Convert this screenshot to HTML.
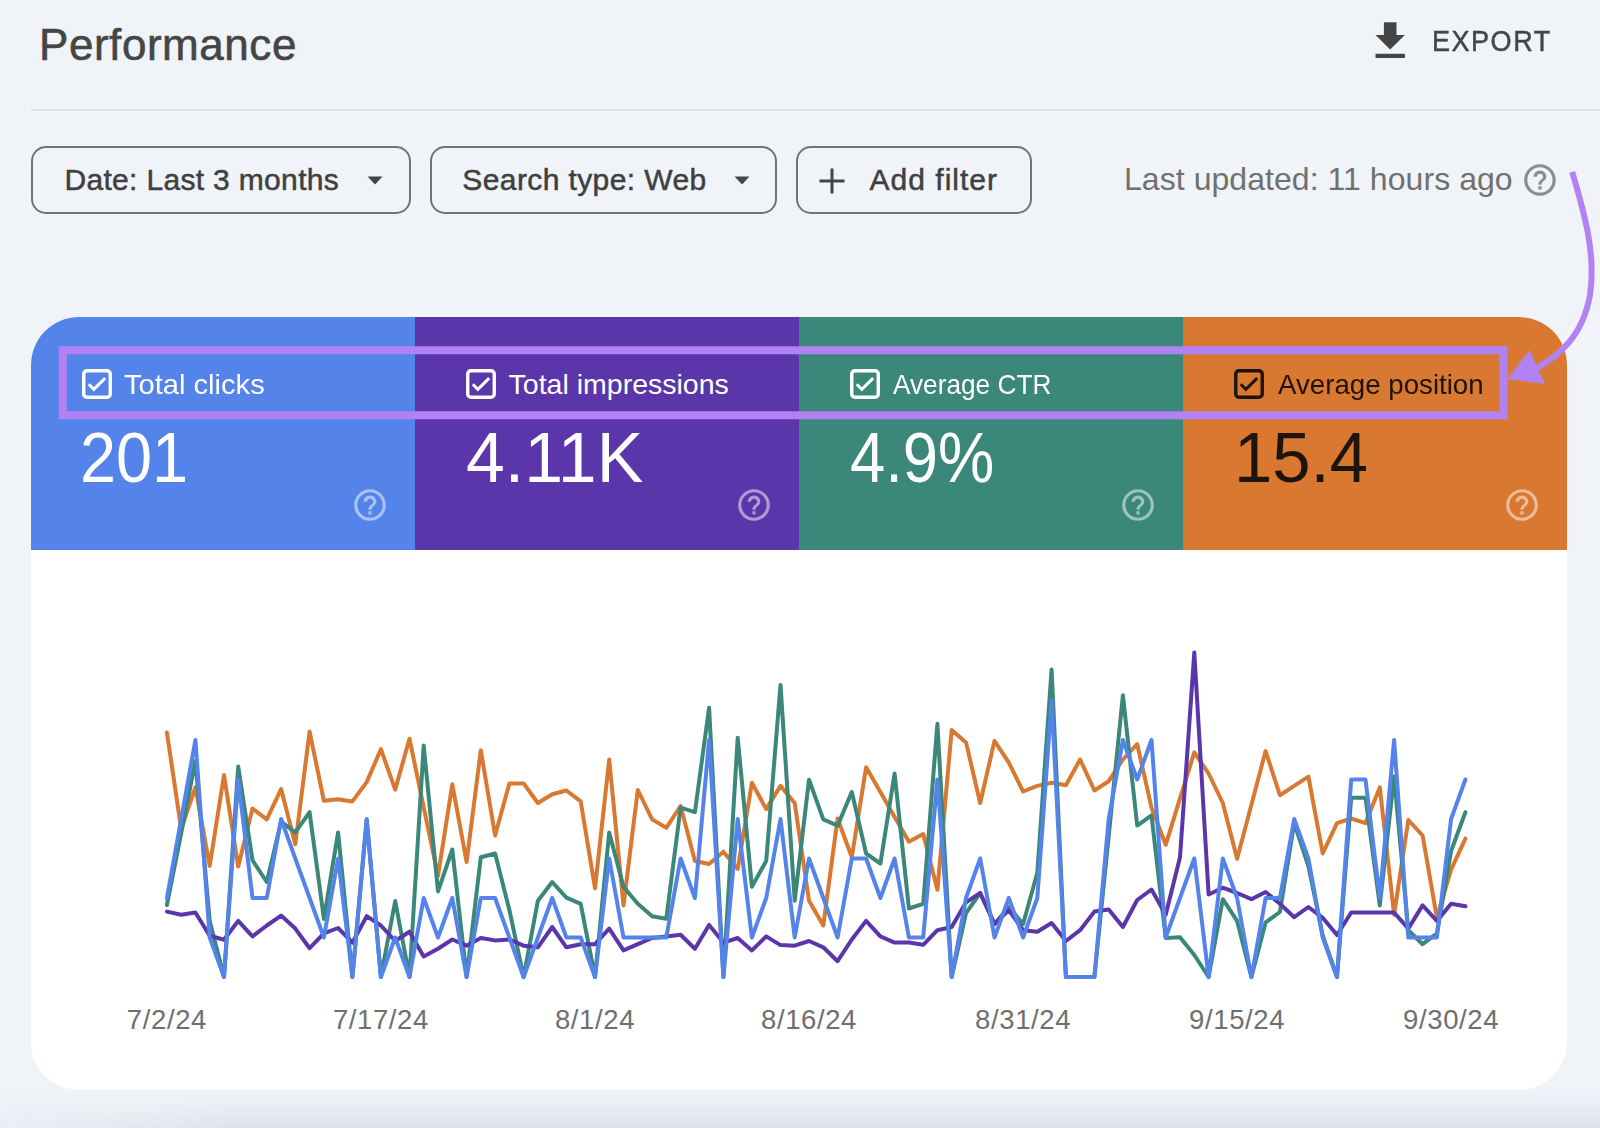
<!DOCTYPE html>
<html><head><meta charset="utf-8"><style>
html,body{margin:0;padding:0;}
body{width:1600px;height:1128px;position:relative;overflow:hidden;background:#f0f4f9;font-family:"Liberation Sans",sans-serif;}
.t{position:absolute;white-space:nowrap;}
.s{-webkit-text-stroke:0.5px currentColor;}
.a{position:absolute;display:block;}
.chip{position:absolute;box-sizing:border-box;border:2px solid #737373;border-radius:15px;}
</style></head><body>

<div class="t" style="left:39px;top:23.1px;font-size:44px;line-height:44px;color:#454545;letter-spacing:0.55px;-webkit-text-stroke:0.6px #454545;">Performance</div>
<svg class="a" style="left:1365px;top:15.9px" width="50.4" height="50.4" viewBox="0 0 24 24"><path fill="#454545" d="M19 9h-4V3H9v6H5l7 7 7-7zM5 18v2h14v-2H5z"/></svg>
<div class="t" style="left:1432px;top:26.2px;font-size:30px;line-height:30px;color:#454545;letter-spacing:1.7px;transform:scaleX(0.9);transform-origin:0 0;-webkit-text-stroke:0.5px #454545;">EXPORT</div>
<div class="a" style="left:31px;top:109px;width:1569px;height:2px;background:#dfe1e1;"></div>
<div class="chip" style="left:31px;top:145.5px;width:380px;height:68px;"></div>
<div class="chip" style="left:430px;top:145.5px;width:347px;height:68px;"></div>
<div class="chip" style="left:796px;top:145.5px;width:236px;height:68px;"></div>
<div class="t" style="left:64.4px;top:164.7px;font-size:30px;line-height:30px;color:#3f3f3f;letter-spacing:0.33px;-webkit-text-stroke:0.5px #3f3f3f;">Date: Last 3 months</div>
<div class="t" style="left:462.3px;top:164.7px;font-size:30px;line-height:30px;color:#3f3f3f;letter-spacing:0.4px;-webkit-text-stroke:0.5px #3f3f3f;">Search type: Web</div>
<div class="t" style="left:869.6px;top:164.7px;font-size:30px;line-height:30px;color:#3f3f3f;letter-spacing:1.0px;-webkit-text-stroke:0.5px #3f3f3f;">Add filter</div>
<svg class="a" style="left:360px;top:170px" width="30" height="20"><path d="M7.5,6.5 H22.5 L15,14.5 Z" fill="#454545"/></svg>
<svg class="a" style="left:727px;top:170px" width="30" height="20"><path d="M7.5,6.5 H22.5 L15,14.5 Z" fill="#454545"/></svg>
<svg class="a" style="left:815px;top:163.5px" width="34" height="34"><path d="M17,4.5 V29.5 M4.5,17 H29.5" stroke="#454545" stroke-width="3"/></svg>
<div class="t" style="left:1124.0px;top:163.1px;font-size:32px;line-height:32px;color:#707070;letter-spacing:0.055px;">Last updated: 11 hours ago</div>
<svg class="a" style="left:1521.24px;top:160.74px;opacity:1.0" width="37.92" height="37.92" viewBox="0 0 24 24"><path fill="#8c8c8c" d="M11 18h2v-2h-2v2zm1-16C6.48 2 2 6.48 2 12s4.48 10 10 10 10-4.48 10-10S17.52 2 12 2zm0 18c-4.41 0-8-3.59-8-8s3.59-8 8-8 8 3.59 8 8-3.59 8-8 8zm0-14c-2.21 0-4 1.79-4 4h2c0-1.1.9-2 2-2s2 .9 2 2c0 2-3 1.75-3 5h2c0-2.25 3-2.5 3-5 0-2.21-1.79-4-4-4z"/></svg>
<div class="a" style="left:31px;top:317px;width:1536px;height:773px;background:#fff;border-radius:48px;overflow:hidden;"><div class="a" style="left:0;top:0;width:384px;height:232.5px;background:#5484ea"></div><div class="a" style="left:384px;top:0;width:384px;height:232.5px;background:#5a36aa"></div><div class="a" style="left:768px;top:0;width:384px;height:232.5px;background:#3b877a"></div><div class="a" style="left:1152px;top:0;width:384px;height:232.5px;background:#d97830"></div></div>
<svg class="a" style="left:82px;top:369.3px" width="30" height="30" viewBox="0 0 30 30"><rect x="1.75" y="1.75" width="26.5" height="26.5" rx="3.2" fill="none" stroke="#ffffff" stroke-width="3.4"/><path d="M6.8,15.2 L11.8,20.3 L23.2,9.1" fill="none" stroke="#ffffff" stroke-width="3"/></svg>
<div class="t" style="left:123.6px;top:369.7px;font-size:28.5px;line-height:28.5px;color:#ffffff;letter-spacing:0px;transform:scaleX(1.021);transform-origin:0 0;">Total clicks</div>
<div class="t" style="left:80.3px;top:422.0px;font-size:71px;line-height:71px;color:#ffffff;letter-spacing:0px;transform:scaleX(0.913);transform-origin:0 0;">201</div>
<svg class="a" style="left:350.98px;top:485.98px;opacity:0.5" width="38.04" height="38.04" viewBox="0 0 24 24"><path fill="#ffffff" d="M11 18h2v-2h-2v2zm1-16C6.48 2 2 6.48 2 12s4.48 10 10 10 10-4.48 10-10S17.52 2 12 2zm0 18c-4.41 0-8-3.59-8-8s3.59-8 8-8 8 3.59 8 8-3.59 8-8 8zm0-14c-2.21 0-4 1.79-4 4h2c0-1.1.9-2 2-2s2 .9 2 2c0 2-3 1.75-3 5h2c0-2.25 3-2.5 3-5 0-2.21-1.79-4-4-4z"/></svg>
<svg class="a" style="left:466px;top:369.3px" width="30" height="30" viewBox="0 0 30 30"><rect x="1.75" y="1.75" width="26.5" height="26.5" rx="3.2" fill="none" stroke="#ffffff" stroke-width="3.4"/><path d="M6.8,15.2 L11.8,20.3 L23.2,9.1" fill="none" stroke="#ffffff" stroke-width="3"/></svg>
<div class="t" style="left:508.6px;top:369.7px;font-size:28.5px;line-height:28.5px;color:#ffffff;letter-spacing:0px;transform:scaleX(1.0);transform-origin:0 0;">Total impressions</div>
<div class="t" style="left:466.1px;top:422.0px;font-size:71px;line-height:71px;color:#ffffff;letter-spacing:0px;transform:scaleX(0.983);transform-origin:0 0;">4.11K</div>
<svg class="a" style="left:734.98px;top:485.98px;opacity:0.5" width="38.04" height="38.04" viewBox="0 0 24 24"><path fill="#ffffff" d="M11 18h2v-2h-2v2zm1-16C6.48 2 2 6.48 2 12s4.48 10 10 10 10-4.48 10-10S17.52 2 12 2zm0 18c-4.41 0-8-3.59-8-8s3.59-8 8-8 8 3.59 8 8-3.59 8-8 8zm0-14c-2.21 0-4 1.79-4 4h2c0-1.1.9-2 2-2s2 .9 2 2c0 2-3 1.75-3 5h2c0-2.25 3-2.5 3-5 0-2.21-1.79-4-4-4z"/></svg>
<svg class="a" style="left:850px;top:369.3px" width="30" height="30" viewBox="0 0 30 30"><rect x="1.75" y="1.75" width="26.5" height="26.5" rx="3.2" fill="none" stroke="#ffffff" stroke-width="3.4"/><path d="M6.8,15.2 L11.8,20.3 L23.2,9.1" fill="none" stroke="#ffffff" stroke-width="3"/></svg>
<div class="t" style="left:892.6px;top:369.7px;font-size:28.5px;line-height:28.5px;color:#ffffff;letter-spacing:0px;transform:scaleX(0.92);transform-origin:0 0;">Average CTR</div>
<div class="t" style="left:850.0px;top:422.0px;font-size:71px;line-height:71px;color:#ffffff;letter-spacing:0px;transform:scaleX(0.892);transform-origin:0 0;">4.9%</div>
<svg class="a" style="left:1118.98px;top:485.98px;opacity:0.5" width="38.04" height="38.04" viewBox="0 0 24 24"><path fill="#ffffff" d="M11 18h2v-2h-2v2zm1-16C6.48 2 2 6.48 2 12s4.48 10 10 10 10-4.48 10-10S17.52 2 12 2zm0 18c-4.41 0-8-3.59-8-8s3.59-8 8-8 8 3.59 8 8-3.59 8-8 8zm0-14c-2.21 0-4 1.79-4 4h2c0-1.1.9-2 2-2s2 .9 2 2c0 2-3 1.75-3 5h2c0-2.25 3-2.5 3-5 0-2.21-1.79-4-4-4z"/></svg>
<svg class="a" style="left:1234px;top:369.3px" width="30" height="30" viewBox="0 0 30 30"><rect x="1.75" y="1.75" width="26.5" height="26.5" rx="3.2" fill="none" stroke="#1f140b" stroke-width="3.4"/><path d="M6.8,15.2 L11.8,20.3 L23.2,9.1" fill="none" stroke="#1f140b" stroke-width="3"/></svg>
<div class="t" style="left:1278px;top:369.7px;font-size:28.5px;line-height:28.5px;color:#1f140b;letter-spacing:0px;transform:scaleX(0.971);transform-origin:0 0;">Average position</div>
<div class="t" style="left:1234.0px;top:422.0px;font-size:71px;line-height:71px;color:#1f140b;letter-spacing:0px;transform:scaleX(0.97);transform-origin:0 0;">15.4</div>
<svg class="a" style="left:1502.98px;top:485.98px;opacity:0.5" width="38.04" height="38.04" viewBox="0 0 24 24"><path fill="#ffffff" d="M11 18h2v-2h-2v2zm1-16C6.48 2 2 6.48 2 12s4.48 10 10 10 10-4.48 10-10S17.52 2 12 2zm0 18c-4.41 0-8-3.59-8-8s3.59-8 8-8 8 3.59 8 8-3.59 8-8 8zm0-14c-2.21 0-4 1.79-4 4h2c0-1.1.9-2 2-2s2 .9 2 2c0 2-3 1.75-3 5h2c0-2.25 3-2.5 3-5 0-2.21-1.79-4-4-4z"/></svg>
<svg class="a" style="left:0;top:0" width="1600" height="1128" viewBox="0 0 1600 1128"><polyline points="166.9,732.5 181.2,829.0 195.4,787.4 209.7,866.0 224.0,775.0 238.2,866.6 252.5,808.5 266.8,819.4 281.1,789.0 295.3,844.2 309.6,731.6 323.9,800.8 338.1,799.2 352.4,801.4 366.7,782.1 380.9,749.2 395.2,789.6 409.5,738.7 423.7,807.3 438.0,875.9 452.3,784.3 466.6,861.9 480.8,750.2 495.1,835.5 509.4,783.4 523.6,783.4 537.9,803.0 552.2,794.3 566.4,790.5 580.7,801.4 595.0,888.3 609.2,759.5 623.5,905.4 637.8,790.0 652.1,819.4 666.3,827.8 680.6,806.0 694.9,861.0 709.1,864.0 723.4,851.7 737.7,869.0 751.9,782.8 766.2,809.1 780.5,785.9 794.7,803.0 809.0,900.7 823.3,925.5 837.6,818.5 851.8,857.3 866.1,767.3 880.4,792.0 894.6,817.0 908.9,841.7 923.2,834.0 937.4,889.8 951.7,730.0 966.0,742.4 980.2,803.0 994.5,740.9 1008.8,762.6 1023.1,791.5 1037.3,785.9 1051.6,782.8 1065.9,785.3 1080.1,759.5 1094.4,790.5 1108.7,781.2 1122.9,759.5 1137.2,744.0 1151.5,807.6 1165.7,844.8 1180.0,798.3 1194.3,752.4 1208.6,773.5 1222.8,803.0 1237.1,858.8 1251.4,804.8 1265.6,751.1 1279.9,795.2 1294.2,785.9 1308.4,776.6 1322.7,853.5 1337.0,823.1 1351.2,818.5 1365.5,823.1 1379.8,787.4 1394.1,914.7 1408.3,820.0 1422.6,835.5 1436.9,917.8 1451.1,869.7 1465.4,838.6" fill="none" stroke="#d97830" stroke-width="4" stroke-linejoin="round" stroke-linecap="round"/><polyline points="166.9,905.0 181.2,833.0 195.4,761.0 209.7,921.0 224.0,977.0 238.2,766.6 252.5,860.4 266.8,882.0 281.1,821.6 295.3,832.4 309.6,812.2 323.9,919.0 338.1,832.4 352.4,977.0 366.7,820.0 380.9,977.0 395.2,901.0 409.5,977.0 423.7,745.5 438.0,891.4 452.3,849.5 466.6,977.0 480.8,857.3 495.1,853.5 509.4,910.0 523.6,977.0 537.9,900.7 552.2,882.0 566.4,897.6 580.7,903.8 595.0,977.0 609.2,832.4 623.5,886.7 637.8,903.8 652.1,916.2 666.3,918.7 680.6,807.6 694.9,812.2 709.1,707.7 723.4,977.0 737.7,737.8 751.9,886.7 766.2,861.0 780.5,685.0 794.7,900.7 809.0,779.7 823.3,819.4 837.6,825.6 851.8,792.0 866.1,853.5 880.4,863.5 894.6,773.5 908.9,908.5 923.2,903.8 937.4,723.8 951.7,977.0 966.0,913.0 980.2,893.0 994.5,924.0 1008.8,907.0 1023.1,924.0 1037.3,872.8 1051.6,669.5 1065.9,977.0 1080.1,977.0 1094.4,977.0 1108.7,836.0 1122.9,695.2 1137.2,825.6 1151.5,815.4 1165.7,938.0 1180.0,937.3 1194.3,955.0 1208.6,977.0 1222.8,899.2 1237.1,920.9 1251.4,977.0 1265.6,922.4 1279.9,912.0 1294.2,823.0 1308.4,866.0 1322.7,935.5 1337.0,977.0 1351.2,797.7 1365.5,797.7 1379.8,905.4 1394.1,776.6 1408.3,930.2 1422.6,944.2 1436.9,933.3 1451.1,851.0 1465.4,812.2" fill="none" stroke="#3b877a" stroke-width="4" stroke-linejoin="round" stroke-linecap="round"/><polyline points="166.9,911.6 181.2,914.7 195.4,912.5 209.7,935.8 224.0,939.8 238.2,920.9 252.5,936.4 266.8,925.5 281.1,915.6 295.3,928.6 309.6,948.2 323.9,933.3 338.1,928.0 352.4,942.6 366.7,916.2 380.9,925.5 395.2,941.0 409.5,931.7 423.7,956.6 438.0,948.8 452.3,939.5 466.6,945.7 480.8,938.0 495.1,940.4 509.4,939.5 523.6,945.7 537.9,947.3 552.2,927.0 566.4,947.3 580.7,944.2 595.0,944.2 609.2,928.6 623.5,950.4 637.8,944.2 652.1,938.0 666.3,936.4 680.6,934.8 694.9,948.8 709.1,924.9 723.4,942.6 737.7,938.0 751.9,950.4 766.2,936.4 780.5,945.1 794.7,945.7 809.0,941.0 823.3,947.3 837.6,961.2 851.8,939.5 866.1,920.9 880.4,936.4 894.6,942.6 908.9,942.6 923.2,944.8 937.4,930.2 951.7,927.0 966.0,902.3 980.2,893.0 994.5,924.0 1008.8,910.0 1023.1,930.2 1037.3,931.7 1051.6,923.0 1065.9,941.0 1080.1,930.2 1094.4,911.6 1108.7,909.4 1122.9,927.0 1137.2,900.0 1151.5,889.5 1165.7,914.7 1180.0,857.3 1194.3,652.4 1208.6,894.5 1222.8,887.7 1237.1,893.0 1251.4,899.2 1265.6,892.0 1279.9,903.8 1294.2,917.2 1308.4,907.0 1322.7,917.8 1337.0,935.0 1351.2,912.5 1365.5,912.5 1379.8,912.5 1394.1,912.5 1408.3,928.6 1422.6,905.4 1436.9,921.0 1451.1,903.8 1465.4,906.3" fill="none" stroke="#5a36aa" stroke-width="4" stroke-linejoin="round" stroke-linecap="round"/><polyline points="166.9,898.0 181.2,819.0 195.4,740.0 209.7,937.5 224.0,977.0 238.2,779.5 252.5,898.0 266.8,898.0 281.1,819.0 295.3,858.5 309.6,898.0 323.9,937.5 338.1,858.5 352.4,977.0 366.7,819.0 380.9,977.0 395.2,937.5 409.5,977.0 423.7,898.0 438.0,937.5 452.3,898.0 466.6,977.0 480.8,898.0 495.1,898.0 509.4,937.5 523.6,977.0 537.9,937.5 552.2,898.0 566.4,937.5 580.7,937.5 595.0,977.0 609.2,858.5 623.5,937.5 637.8,937.5 652.1,937.5 666.3,937.5 680.6,858.5 694.9,898.0 709.1,740.0 723.4,977.0 737.7,819.0 751.9,937.5 766.2,898.0 780.5,819.0 794.7,937.5 809.0,858.5 823.3,898.0 837.6,937.5 851.8,858.5 866.1,858.5 880.4,898.0 894.6,858.5 908.9,937.5 923.2,937.5 937.4,779.5 951.7,977.0 966.0,898.0 980.2,858.5 994.5,937.5 1008.8,898.0 1023.1,937.5 1037.3,898.0 1051.6,700.5 1065.9,977.0 1080.1,977.0 1094.4,977.0 1108.7,819.0 1122.9,740.0 1137.2,779.5 1151.5,740.0 1165.7,937.5 1180.0,898.0 1194.3,858.5 1208.6,977.0 1222.8,858.5 1237.1,898.0 1251.4,977.0 1265.6,898.0 1279.9,898.0 1294.2,819.0 1308.4,858.5 1322.7,937.5 1337.0,977.0 1351.2,779.5 1365.5,779.5 1379.8,898.0 1394.1,740.0 1408.3,937.5 1422.6,937.5 1436.9,937.5 1451.1,819.0 1465.4,779.5" fill="none" stroke="#5484ea" stroke-width="4" stroke-linejoin="round" stroke-linecap="round"/></svg>
<div class="t" style="left:66.9px;width:200px;text-align:center;top:1005.8px;font-size:27.5px;line-height:27.5px;color:#6f6f6f;letter-spacing:0.6px;">7/2/24</div>
<div class="t" style="left:280.9px;width:200px;text-align:center;top:1005.8px;font-size:27.5px;line-height:27.5px;color:#6f6f6f;letter-spacing:0.6px;">7/17/24</div>
<div class="t" style="left:495.0px;width:200px;text-align:center;top:1005.8px;font-size:27.5px;line-height:27.5px;color:#6f6f6f;letter-spacing:0.6px;">8/1/24</div>
<div class="t" style="left:709.0px;width:200px;text-align:center;top:1005.8px;font-size:27.5px;line-height:27.5px;color:#6f6f6f;letter-spacing:0.6px;">8/16/24</div>
<div class="t" style="left:923.1px;width:200px;text-align:center;top:1005.8px;font-size:27.5px;line-height:27.5px;color:#6f6f6f;letter-spacing:0.6px;">8/31/24</div>
<div class="t" style="left:1137.1px;width:200px;text-align:center;top:1005.8px;font-size:27.5px;line-height:27.5px;color:#6f6f6f;letter-spacing:0.6px;">9/15/24</div>
<div class="t" style="left:1351.1px;width:200px;text-align:center;top:1005.8px;font-size:27.5px;line-height:27.5px;color:#6f6f6f;letter-spacing:0.6px;">9/30/24</div>
<svg class="a" style="left:0;top:0" width="1600" height="1128" viewBox="0 0 1600 1128"><rect x="62.75" y="350.25" width="1440.75" height="65" fill="none" stroke="#b282f5" stroke-width="8"/><path d="M1572.2,171.8 C1585,215 1596,255 1590,295 C1583,335 1560,358 1525,374" fill="none" stroke="#b282f5" stroke-width="6"/><path d="M1507.5,379 L1529.5,350 L1544.6,384.1 Z" fill="#b282f5"/></svg>
<div class="a" style="left:0;top:1086px;width:1600px;height:42px;background:linear-gradient(rgba(0,0,0,0) 0%,rgba(30,40,60,0.02) 40%,rgba(20,25,35,0.075) 100%);-webkit-mask-image:linear-gradient(to right,rgba(0,0,0,0.3) 0px,#000 240px);"></div>
</body></html>
